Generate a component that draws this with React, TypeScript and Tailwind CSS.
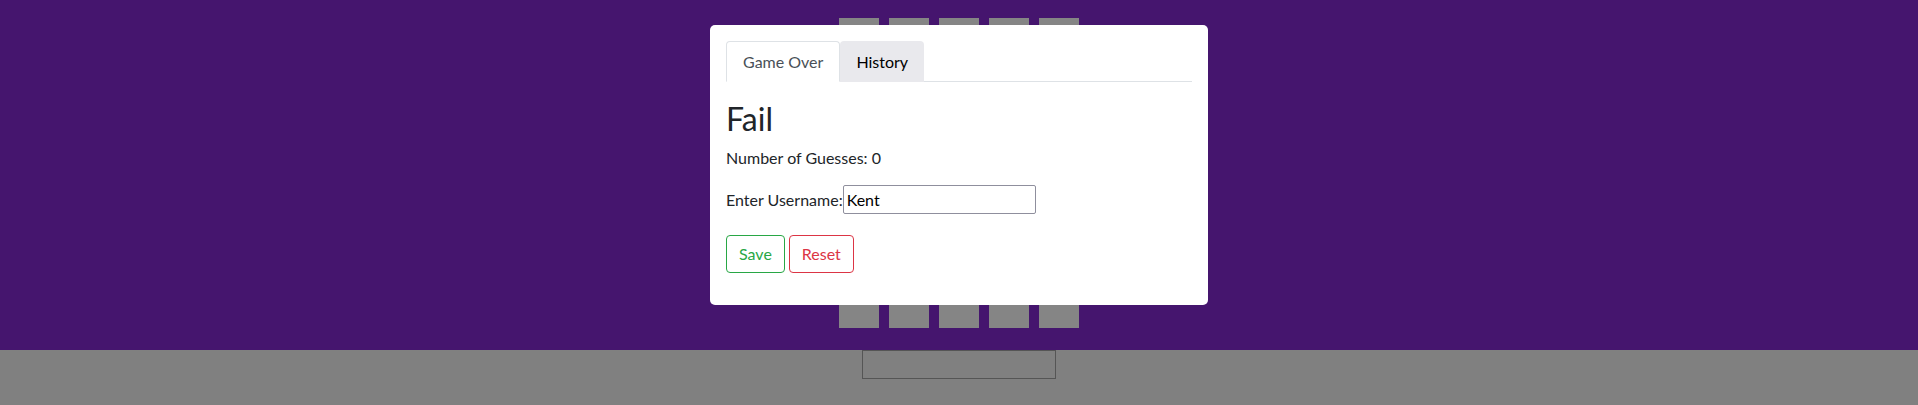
import { useState } from "react";

// board of empty tiles, mostly hidden behind the game over modal
const rows = [0, 1, 2, 3, 4, 5];
const cols = [0, 1, 2, 3, 4];

export default function App() {
  const [tab, setTab] = useState<"over" | "history">("over");
  const [username, setUsername] = useState("Kent");

  return (
    <div className="relative w-full min-h-[405px] bg-[#808080] font-['Lato',sans-serif]">
      <div className="bg-[#45156e] h-[350px] pt-[18px] flex flex-col items-center gap-[14px]">
        {rows.map(r => (
          <div key={r} className="flex gap-[10px]">
            {cols.map(c => (
              <div key={c} className="w-10 h-10 bg-[#858585]" />
            ))}
          </div>
        ))}
      </div>

      <div className="flex justify-center">
        <input className="w-[194px] h-[29px] border border-[#555] bg-transparent" />
      </div>

      {/* modal */}
      <div className="absolute left-1/2 top-[25px] -translate-x-1/2 w-[498px] bg-white rounded-[5px] p-4 text-[#212529]">
        <div className="flex border-b border-[#dee2e6]">
          <button
            className={`h-[41px] px-4 text-base leading-6 rounded-t-[4px] -mb-px ${tab === "over" ? "bg-white border border-[#dee2e6] border-b-white text-[#495057]" : "bg-[#e9e9ed] text-black"}`}
            onClick={() => setTab("over")}
          >
            Game Over
          </button>
          <button
            className={`h-[41px] px-4 text-base leading-6 rounded-t-[4px] -mb-px ${tab === "history" ? "bg-white border border-[#dee2e6] border-b-white text-[#495057]" : "bg-[#e9e9ed] text-black"}`}
            onClick={() => setTab("history")}
          >
            History
          </button>
        </div>

        <h2 className="text-[32px] leading-[1.2] mt-[18px] mb-2 font-normal">Fail</h2>
        <p className="text-base leading-6 mb-[15px]">Number of Guesses: 0</p>

        <div className="flex items-center text-base mb-[21px]">
          <label htmlFor="username">Enter Username:</label>
          <input
            id="username"
            className="w-[193px] h-[29px] border border-[#8f8f9d] rounded-[2px] px-[3px] text-black"
            value={username}
            onChange={e => setUsername(e.target.value)}
          />
        </div>

        <div className="flex gap-1 mb-4">
          <button className="h-[38px] px-3 border border-[#28a745] text-[#28a745] rounded-[4px] text-base leading-6">
            Save
          </button>
          <button className="h-[38px] px-3 border border-[#dc3545] text-[#dc3545] rounded-[4px] text-base leading-6">
            Reset
          </button>
        </div>
      </div>
    </div>
  );
}
